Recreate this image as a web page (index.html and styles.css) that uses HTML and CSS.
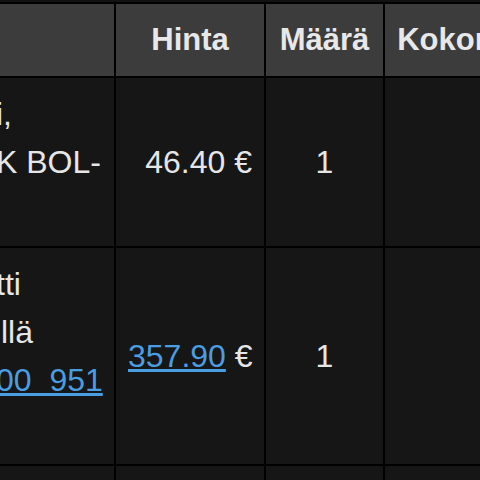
FILE: index.html
```html
<!DOCTYPE html>
<html lang="fi">
<head>
<meta charset="utf-8">
<title>Ostoskori</title>
<link rel="stylesheet" href="styles.css">
</head>
<body>
<table class="cart">
  <thead>
    <tr>
      <th class="col-prod"></th>
      <th class="col-price">Hinta</th>
      <th class="col-qty">Määrä</th>
      <th class="col-total">Kokonaishinta</th>
    </tr>
  </thead>
  <tbody>
    <tr>
      <td class="col-prod">i,<br>K BOL-<br>&nbsp;</td>
      <td class="col-price">46.40 €</td>
      <td class="col-qty">1</td>
      <td class="col-total">46.40 €</td>
    </tr>
    <tr>
      <td class="col-prod">tti<br><span class="shift">llä</span><br><a href="#">00&nbsp; 951</a><br>&nbsp;</td>
      <td class="col-price"><a href="#">357.90</a> €</td>
      <td class="col-qty">1</td>
      <td class="col-total">357.90 €</td>
    </tr>
    <tr>
      <td class="col-prod">&nbsp;<br>&nbsp;</td>
      <td class="col-price">9.90 €</td>
      <td class="col-qty">1</td>
      <td class="col-total">9.90 €</td>
    </tr>
  </tbody>
</table>
</body>
</html>
```
FILE: styles.css
```css
html, body {
  margin: 0;
  padding: 0;
  background: #121212;
  overflow: hidden;
}

body {
  font-family: "Liberation Sans", Arial, sans-serif;
  color: #e6e6e6;
}

.cart {
  border-collapse: separate;
  border-spacing: 0;
  table-layout: fixed;
  width: 641px;
  margin: 2px 0 0 -16px;
  border-top: 2px solid #000;
}

.cart th,
.cart td {
  box-sizing: border-box;
  padding: 12px;
  border-right: 2px solid #000;
  border-bottom: 2px solid #000;
  line-height: 48px;
  white-space: nowrap;
  overflow: hidden;
}

.cart th {
  background: #3c3c3c;
  color: #e8e8e8;
  font-size: 31px;
  font-weight: bold;
  text-align: center;
}

.cart td {
  background: #161616;
  font-size: 32px;
  vertical-align: middle;
}

.col-prod { width: 132px; }
.col-price { width: 150px; }
.col-qty { width: 119px; }
.col-total { width: 240px; }

.cart td.col-prod { text-align: left; vertical-align: top; }
.cart td.col-price { text-align: right; }
.cart td.col-qty { text-align: center; }
.cart td.col-total { text-align: right; }

.shift { padding-left: 5px; }

.cart a {
  color: #4a9de0;
  text-decoration: underline;
}
```
